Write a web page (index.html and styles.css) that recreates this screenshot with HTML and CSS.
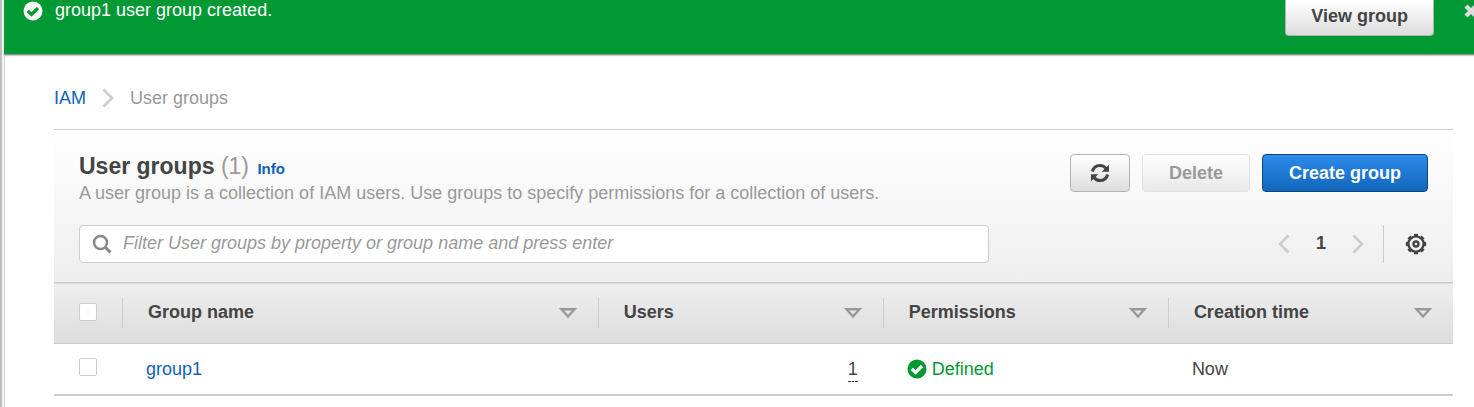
FILE: index.html
```html
<!DOCTYPE html>
<html lang="en">
<head>
<meta charset="utf-8">
<title>IAM - User groups</title>
<link rel="stylesheet" href="styles.css">
</head>
<body>
<svg class="sprite" aria-hidden="true">
  <symbol id="check" viewBox="0 0 20 20"><circle cx="10" cy="10" r="9.5" fill="currentColor"/><path class="tick" d="M4.800 9.800l3.700 3.700 6.500-6.500" fill="none" stroke-width="3.200"/></symbol>
  <symbol id="chevron" viewBox="0 0 12 20"><path d="M1.500 1.500l8.500 8.500-8.500 8.500" fill="none" stroke="currentColor" stroke-width="2.6"/></symbol>
  <symbol id="sort" viewBox="0 0 18 12"><path d="M2.5 2.300h13L9 9.500z" fill="none" stroke="currentColor" stroke-width="2.4"/></symbol>
</svg>
<div class="page">
  <div class="banner" role="status">
    <svg class="icon banner-icon"><use href="#check"/></svg>
    <p class="banner-text">group1 user group created.</p>
    <button class="btn btn-view" type="button">View group</button>
    <button class="close" type="button" aria-label="Dismiss">
      <svg class="close-icon" viewBox="0 0 14 14"><path d="M2 2l10 10M12 2L2 12" stroke="currentColor" stroke-width="4.400"/></svg>
    </button>
  </div>
  <main class="content">
    <nav class="crumbs" aria-label="Breadcrumb">
      <a class="link" href="#">IAM</a>
      <svg class="chevron"><use href="#chevron"/></svg>
      <span>User groups</span>
    </nav>
    <section class="panel">
      <div class="tools">
        <div class="row">
          <div class="heading">
            <h1 class="title">User groups <span class="count">(1)</span> <a class="link info" href="#">Info</a></h1>
            <p class="desc">A user group is a collection of IAM users. Use groups to specify permissions for a collection of users.</p>
          </div>
          <div class="actions">
            <button class="btn btn-refresh" type="button" aria-label="Refresh">
              <svg class="icon" viewBox="0 0 20 20"><g fill="none" stroke="currentColor" stroke-width="3"><path d="M2.300 8.500C3.500 4.500 6.500 2.500 10 2.500c2.500 0 4.500 1 6 3"/><path d="M17.700 11.500c-1.200 4-4.200 6-7.700 6-2.500 0-4.500-1-6-3"/></g><path d="M19 1.800v7h-7.300zM1 18.200v-7h7.300z" fill="currentColor"/></svg>
            </button>
            <button class="btn" type="button" disabled>Delete</button>
            <button class="btn btn-primary" type="button">Create group</button>
          </div>
        </div>
        <div class="row filter-row">
          <label class="search">
            <svg class="search-icon" viewBox="0 0 20 20"><g fill="none" stroke="currentColor" stroke-width="2.500"><circle cx="8.500" cy="8.500" r="6.500"/><path d="M13 13l5.500 5.500" stroke-width="3"/></g></svg>
            <input class="search-input" type="text" aria-label="Filter user groups" placeholder="Filter User groups by property or group name and press enter">
          </label>
          <div class="pager">
            <button class="page-btn" type="button" aria-label="Previous page"><svg class="chevron flip"><use href="#chevron"/></svg></button>
            <span class="page-number">1</span>
            <button class="page-btn" type="button" aria-label="Next page"><svg class="chevron"><use href="#chevron"/></svg></button>
            <div class="settings">
              <button class="gear" type="button" aria-label="Preferences">
                <svg class="gear-icon" viewBox="0 0 22 22"><g fill="none" stroke="currentColor" stroke-width="2.400"><circle cx="11" cy="11" r="7.600"/><circle cx="11" cy="11" r="9" pathLength="80" stroke-dasharray="5.500 4.500" stroke-dashoffset="2.750"/><circle cx="11" cy="11" r="2.500"/></g></svg>
              </button>
            </div>
          </div>
        </div>
      </div>
      <table class="table">
        <thead>
          <tr>
            <th class="col-check"><input class="check" type="checkbox" aria-label="Select all groups"></th>
            <th class="col-name"><div class="head">Group name<svg class="sort"><use href="#sort"/></svg></div></th>
            <th><div class="head">Users<svg class="sort"><use href="#sort"/></svg></div></th>
            <th><div class="head">Permissions<svg class="sort"><use href="#sort"/></svg></div></th>
            <th><div class="head">Creation time<svg class="sort"><use href="#sort"/></svg></div></th>
          </tr>
        </thead>
        <tbody>
          <tr>
            <td class="col-check"><input class="check" type="checkbox" aria-label="Select group1"></td>
            <td><a class="link" href="#">group1</a></td>
            <td class="num"><span class="hint">1</span></td>
            <td><span class="status"><svg class="icon"><use href="#check"/></svg>Defined</span></td>
            <td>Now</td>
          </tr>
        </tbody>
      </table>
    </section>
  </main>
</div>
</body>
</html>
```
FILE: styles.css
```css
* { box-sizing: border-box; }
body {
  margin: 0;
  background: #fff;
  color: #444;
  font: 18px/24px "Liberation Sans", Arial, sans-serif;
}
h1, p { margin: 0; }
button, input { font: inherit; }
svg { display: block; flex: none; }
.sprite { position: absolute; width: 0; height: 0; }
.page {
  min-height: 100vh;
  padding-left: 2px;
  border-left: 2px solid #bfbfbf;
  background: #f2f3f3;
  overflow: hidden;
}
.link { color: #1360ba; text-decoration: none; }
.icon { width: 20px; height: 20px; }
.tick { stroke: var(--tick, #fff); }

.banner {
  display: flex;
  align-items: flex-start;
  height: 55px;
  padding-left: 19px;
  background: #009933;
  border-bottom: 1px solid #8a9a8f;
  box-shadow: 0 1px 1px #ccc;
  color: #fff;
  position: relative;
}
.banner-icon { margin-top: 1px; color: #f8f8f8; --tick: #009933; }
.banner-text { flex: 1; padding-left: 12px; line-height: 20px; }
.close {
  margin: 4px -4px 0 30px;
  padding: 0;
  border: 0;
  background: none;
  color: #ddd;
}
.close-icon { width: 14px; height: 14px; }

.btn {
  height: 38px;
  padding: 0 26px;
  border: 1px solid #b3b3b3;
  border-radius: 4px;
  background: linear-gradient(#fff, #ddd);
  color: #444;
  font-weight: bold;
}
.btn:disabled { border-color: #e3e3e3; background: linear-gradient(#fff, #e8e8e8); color: #999; }
.btn-primary { border-color: #0b4681; background: linear-gradient(#2e8bea, #1166bb); color: #fff; }
.btn-refresh { padding: 0 19px; }
.btn-view {
  height: 36px;
  padding: 0 25px 4px;
  border-top: 0;
  border-radius: 0 0 4px 4px;
}

.content {
  min-height: 352px;
  padding: 31px 21px 0 49px;
  border-left: 1px solid #d0d4d4;
  background: #fff;
}
.crumbs {
  display: flex;
  align-items: center;
  gap: 16px;
  padding-bottom: 19px;
  color: #999;
}
.chevron { width: 12px; height: 20px; color: #ccc; }
.flip { transform: scaleX(-1); }

.panel { border-top: 1px solid #ccc; }
.tools {
  padding: 24px 25px 19px;
  background: linear-gradient(#fff, #eee);
}
.row { display: flex; justify-content: space-between; }
.title { font-size: 23px; line-height: 24px; }
.count { color: #999; font-weight: normal; }
.info { margin-left: 2px; font-size: 15px; }
.desc { color: #999; }
.actions { display: flex; gap: 12px; }
.filter-row { padding-top: 20px; }
.search {
  display: flex;
  align-items: center;
  flex: 0 1 910px;
  height: 38px;
  padding: 0 12px;
  border: 1px solid #ccc;
  border-radius: 4px;
  background: #fff;
}
.search-icon { width: 20px; height: 20px; color: #888; }
.search-input {
  flex: 1;
  padding: 0 0 2px 11px;
  border: 0;
  outline: 0;
  background: none;
}
.search-input::placeholder { color: #999; font-style: italic; opacity: 1; }
.pager { display: flex; align-items: center; }
.page-btn, .gear { padding: 0; border: 0; background: none; }
.page-number { padding: 0 26px 2px; font-size: 18px; font-weight: bold; }
.settings {
  display: flex;
  align-items: center;
  height: 38px;
  margin-left: 19px;
  padding: 0 1px 0 21px;
  border-left: 1px solid #ccc;
}
.gear { color: #444; }
.gear-icon { width: 22px; height: 22px; }

.table { width: 100%; table-layout: fixed; border-collapse: collapse; }
.table thead tr {
  height: 61px;
  border-top: 1px solid #ccc;
  border-bottom: 1px solid #ccc;
  background: linear-gradient(#eee, #ddd);
}
.table tbody tr { height: 51px; border-bottom: 2px solid #ccc; }
.table th { padding: 0; text-align: left; }
.table td { padding: 0 25px 0 24px; }
.table .col-check { width: 68px; padding: 0 0 0 25px; }
.col-name { width: 34%; }
.head {
  display: flex;
  align-items: center;
  justify-content: space-between;
  height: 30px;
  padding: 0 21px 2px 25px;
  border-left: 1px solid #ccc;
}
.sort { width: 18px; height: 12px; margin-top: 2px; color: #999; }
.check {
  appearance: none;
  display: block;
  width: 18px;
  height: 18px;
  margin: 0 0 3px;
  border: 1px solid #ccc;
  border-radius: 2px;
  background: #fff;
}
.table .num { text-align: right; }
.hint { padding-bottom: 2px; border-bottom: 1px dashed #444; }
.status { display: flex; align-items: center; gap: 5px; color: #009933; }
```
